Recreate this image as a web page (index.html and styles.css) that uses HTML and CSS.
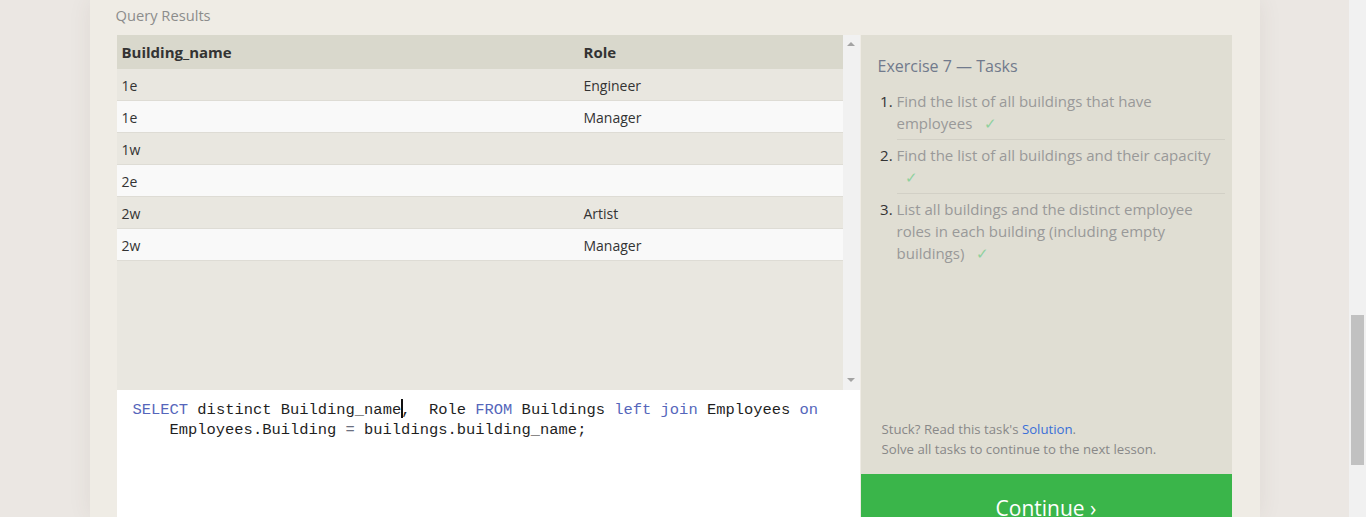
FILE: index.html
```html
<!DOCTYPE html>
<html>
<head>
<meta charset="utf-8">
<title>SQL Lesson</title>
<link rel="stylesheet" href="styles.css">
</head>
<body>
<div class="viewport">
  <main class="lesson">
    <h2 class="results-title">Query Results</h2>
    <div class="workspace">
      <div class="left-col">
        <div class="results">
          <div class="table-wrap">
            <table class="grid">
              <colgroup><col class="col-name"><col class="col-role"></colgroup>
              <thead>
                <tr><th>Building_name</th><th>Role</th></tr>
              </thead>
              <tbody>
                <tr><td>1e</td><td>Engineer</td></tr>
                <tr><td>1e</td><td>Manager</td></tr>
                <tr><td>1w</td><td></td></tr>
                <tr><td>2e</td><td></td></tr>
                <tr><td>2w</td><td>Artist</td></tr>
                <tr><td>2w</td><td>Manager</td></tr>
              </tbody>
            </table>
          </div>
          <div class="vscroll"><span class="arrow up"></span><span class="arrow down"></span></div>
        </div>
        <div class="editor">
          <div class="code-line"><span class="kw">SELECT</span> distinct Building_name<span class="cursor"></span>,  Role <span class="kw">FROM</span> Buildings <span class="kw">left</span> <span class="kw">join</span> Employees <span class="kw">on</span></div>
          <div class="code-line wrapped">Employees.Building <span class="op">=</span> buildings.building_name;</div>
        </div>
      </div>
      <aside class="tasks">
        <div class="tasks-body">
          <h3 class="tasks-title">Exercise 7 — Tasks</h3>
          <ol class="task-list">
            <li>Find the list of all buildings that have employees <span class="check">✓</span></li>
            <li>Find the list of all buildings and their capacity <span class="check">✓</span></li>
            <li>List all buildings and the distinct employee roles in each building (including empty buildings) <span class="check">✓</span></li>
          </ol>
          <div class="tasks-footer">
            <p>Stuck? Read this task's <a class="link" href="#">Solution</a>.</p>
            <p>Solve all tasks to continue to the next lesson.</p>
          </div>
        </div>
        <div class="continue">Continue ›</div>
      </aside>
    </div>
  </main>
</div>
<div class="page-scrollbar"><div class="thumb"></div></div>
</body>
</html>
```
FILE: styles.css
```css
html, body {
  margin: 0;
  height: 517px;
}
body {
  display: flex;
  overflow: hidden;
  background: #ebe7e3;
  font-family: "Open Sans", "Noto Sans", sans-serif;
  font-size: 14px;
  color: #333;
}
.viewport {
  flex: 1;
  display: flex;
  justify-content: center;
  min-width: 0;
}
.lesson {
  width: 1170px;
  flex: none;
  box-sizing: border-box;
  background: #efece5;
  box-shadow: 0 0 22px rgba(90, 70, 50, 0.08);
  padding: 0 28px 0 27px;
  display: flex;
  flex-direction: column;
}
.results-title {
  flex: none;
  margin: 0 0 0 -1px;
  height: 35px;
  line-height: 31px;
  font-size: 14.7px;
  font-weight: normal;
  color: #8c8c8c;
}
.workspace {
  flex: none;
  display: flex;
  gap: 1px;
  align-items: flex-start;
}
.left-col {
  width: 743px;
  display: flex;
  flex-direction: column;
  height: 520px;
}
.results {
  flex: none;
  height: 355px;
  display: flex;
  background: #e9e7e0;
}
.table-wrap {
  flex: 1;
}
.grid {
  width: 100%;
  border-collapse: collapse;
  table-layout: fixed;
}
.col-name { width: 462px; }
.grid th {
  padding: 7px 5px;
  line-height: 20px;
  text-align: left;
  background: #d9d8cc;
  font-size: 15px;
  font-weight: bold;
  color: #333;
}
.grid td {
  padding: 7px 5px 4px;
  line-height: 20px;
  border-bottom: 1px solid #dedcd5;
  color: #333;
}
.grid tbody tr:nth-child(odd) td { background: #e9e7e0; }
.grid tbody tr:nth-child(even) td { background: #f9f9f9; }
.vscroll {
  width: 17px;
  background: #f1f1f1;
  display: flex;
  flex-direction: column;
  justify-content: space-between;
  align-items: center;
  padding: 7px 0 8px;
  box-sizing: border-box;
}
.arrow {
  width: 0;
  height: 0;
  border-left: 4px solid transparent;
  border-right: 4px solid transparent;
}
.arrow.up { border-bottom: 4px solid #a3a3a3; }
.arrow.down { border-top: 4px solid #a3a3a3; }
.editor {
  flex: 1;
  background: #fff;
  padding: 9px 16px;
  font-family: "Liberation Mono", monospace;
  font-size: 15.45px;
  line-height: 20px;
  color: #1f1f1f;
}
.code-line { white-space: pre; }
.code-line.wrapped { padding-left: 37px; }
.kw { color: #5566bb; }
.op { color: #6b6f80; }
.cursor {
  display: inline-block;
  width: 0;
  height: 19px;
  border-left: 2px solid #111;
  margin-right: -2px;
  vertical-align: -4px;
}
.tasks {
  width: 371px;
  display: flex;
  flex-direction: column;
}
.tasks-body {
  height: 439px;
  box-sizing: border-box;
  background: #e0ded3;
  padding: 20px 7px 15px 17px;
  display: flex;
  flex-direction: column;
}
.tasks-title {
  margin: 0;
  font-size: 16px;
  font-weight: normal;
  line-height: 22px;
  color: #717a8c;
}
.task-list {
  margin: 13px 0 0;
  padding: 0 0 0 19px;
  color: #999;
  font-size: 15px;
  line-height: 22px;
}
.task-list li {
  padding: 0 0 5px;
}
.task-list li + li {
  border-top: 1px solid #d2d0c6;
  padding-top: 4px;
}
.task-list li::marker {
  color: #333;
}
.check {
  color: #8fd19e;
  margin-left: 8px;
}
.tasks-footer {
  margin-top: auto;
  padding-left: 4px;
  font-size: 13.2px;
  line-height: 20px;
  color: #888;
}
.tasks-footer p { margin: 0; }
.link {
  color: #3a6fd8;
  text-decoration: none;
}
.continue {
  height: 68px;
  line-height: 68px;
  background: #3ab54a;
  color: #fff;
  text-align: center;
  font-size: 21px;
}
.page-scrollbar {
  width: 17px;
  flex: none;
  background: #f1f1f1;
}
.thumb {
  margin: 315px 2px 0;
  height: 150px;
  background: #c1c1c1;
}
```
